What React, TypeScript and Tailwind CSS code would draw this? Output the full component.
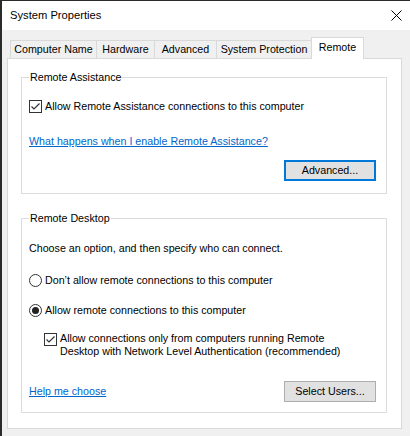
import React from "react";

const font = "font-['Liberation_Sans',Arial,sans-serif]";

function CheckBox() {
  return (
    <span className="flex h-[13px] w-[13px] shrink-0 items-center justify-center border border-[#333] bg-white">
      <svg width="11" height="11" viewBox="0 0 11 11">
        <path d="M1.5 5.5 L4 8 L9.5 2.5" fill="none" stroke="#333" strokeWidth="1.2" />
      </svg>
    </span>
  );
}

function Radio({ checked }: { checked?: boolean }) {
  return (
    <span className="flex h-[13px] w-[13px] shrink-0 items-center justify-center rounded-full border border-[#333] bg-white">
      {checked && <span className="h-[7px] w-[7px] rounded-full bg-[#222]" />}
    </span>
  );
}

function Button({ label, focused }: { label: string; focused?: boolean }) {
  return (
    <div
      className={
        focused
          ? "flex h-[21px] w-[92px] items-center justify-center border-2 border-[#0078d7] bg-[#e1e1e1]"
          : "flex h-[21px] w-[92px] items-center justify-center border border-[#adadad] bg-[#e1e1e1]"
      }
    >
      {label}
    </div>
  );
}

function GroupBox({ title, children }: { title: string; children: React.ReactNode }) {
  return (
    <div className="flex flex-col border border-[#dcdcdc] px-[7px]">
      <span className="-mt-[7px] w-fit bg-white px-px leading-[13px]">{title}</span>
      {children}
    </div>
  );
}

export default function App() {
  const tabs = [
    { label: "Computer Name", w: "w-[87px]" },
    { label: "Hardware", w: "w-[59px]" },
    { label: "Advanced", w: "w-[63px]" },
    { label: "System Protection", w: "w-[96px]" },
  ];

  return (
    <div className={`flex h-[436px] w-[410px] flex-col overflow-hidden border-l-2 border-t border-[#2b2b2b] bg-[#f0f0f0] text-[10.7px] text-black ${font}`}>
      {/* Title bar */}
      <div className="flex h-[29px] shrink-0 items-center justify-between bg-white pl-[8px] pr-[8px]">
        <span className="text-[11.2px]">System Properties</span>
        <svg width="11" height="11" viewBox="0 0 11 11">
          <path d="M0.5 0.5 L10.5 10.5 M10.5 0.5 L0.5 10.5" stroke="#000" strokeWidth="1" />
        </svg>
      </div>

      {/* Tabs */}
      <div className="mt-[7px] flex h-[21px] items-end pl-[8px]">
        {tabs.map((t) => (
          <div
            key={t.label}
            className={`-mr-px flex h-[18px] ${t.w} items-center justify-center border border-b-0 border-[#d9d9d9] bg-[#f0f0f0] leading-[13px]`}
          >
            {t.label}
          </div>
        ))}
        <div className="relative z-10 -mb-px flex h-[22px] w-[53px] items-start justify-center border border-b-0 border-[#d9d9d9] bg-white pt-[3px] leading-[13px]">
          Remote
        </div>
      </div>

      {/* Panel */}
      <div className="ml-[5px] flex h-[371px] w-[395px] flex-col border border-[#d9d9d9] bg-white pl-[13px] pr-[14px] pt-[18px]">
        <GroupBox title="Remote Assistance">
          <label className="mt-[16px] flex items-center gap-[3px] leading-[13px]">
            <CheckBox />
            <span>Allow Remote Assistance connections to this computer</span>
          </label>
          <a className="mt-[22px] w-fit leading-[13px] text-[#0066cc] underline">
            What happens when I enable Remote Assistance?
          </a>
          <div className="mt-[12px] flex justify-end pb-[12px] pr-[3px]">
            <Button label="Advanced..." focused />
          </div>
        </GroupBox>

        <div className="mt-[24px]">
          <GroupBox title="Remote Desktop">
            <p className="mt-[17px] leading-[13px]">Choose an option, and then specify who can connect.</p>
            <label className="mt-[19px] flex items-center gap-[3px] leading-[13px]">
              <Radio />
              <span>Don’t allow remote connections to this computer</span>
            </label>
            <label className="mt-[17px] flex items-center gap-[3px] leading-[13px]">
              <Radio checked />
              <span>Allow remote connections to this computer</span>
            </label>
            <label className="ml-[15px] mt-[15px] flex items-start gap-[3px] leading-[13px]">
              <span className="mt-[1px]">
                <CheckBox />
              </span>
              <span>
                Allow connections only from computers running Remote
                <br />
                Desktop with Network Level Authentication (recommended)
              </span>
            </label>
            <div className="mt-[23px] flex items-center justify-between pb-[10px] pr-[3px]">
              <a className="leading-[13px] text-[#0066cc] underline">Help me choose</a>
              <Button label="Select Users..." />
            </div>
          </GroupBox>
        </div>
      </div>
    </div>
  );
}
